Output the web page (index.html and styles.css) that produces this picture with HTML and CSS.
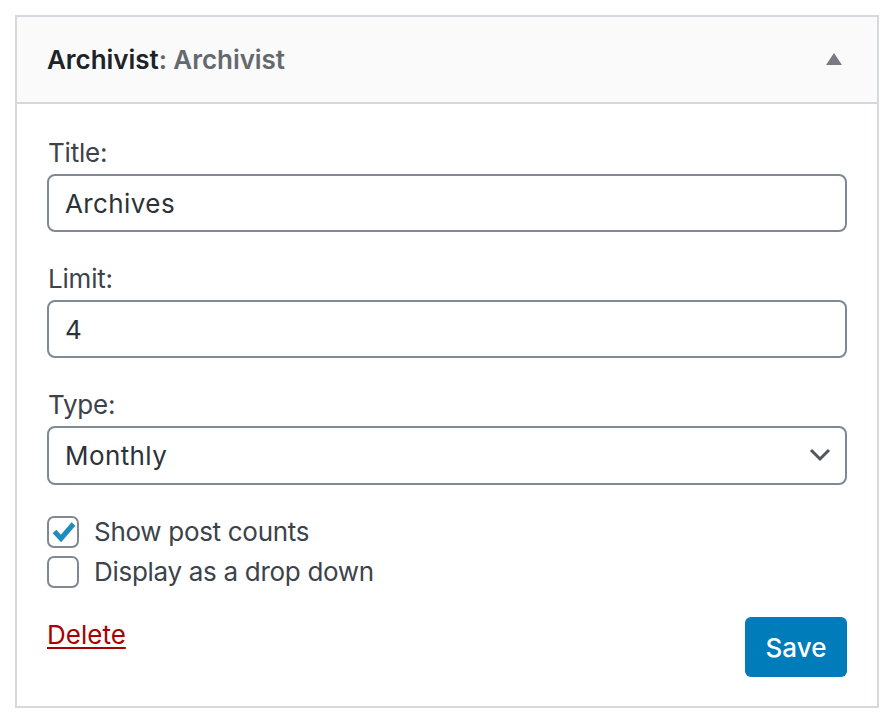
FILE: index.html
```html
<!DOCTYPE html>
<html lang="en">
<head>
<meta charset="utf-8">
<title>Archivist widget</title>
<link rel="stylesheet" href="styles.css">
</head>
<body>
<div class="widget">
  <div class="widget-top">
    <h3 class="widget-title">Archivist<span class="in-title">: Archivist</span></h3>
    <svg class="toggle" width="16" height="12" viewBox="0 0 16 12" aria-hidden="true"><polygon points="8,0 16,12 0,12" fill="#787c82"/></svg>
  </div>
  <div class="widget-inside">
    <p class="field">
      <label class="label" for="title">Title:</label>
      <input class="control" id="title" type="text" value="Archives">
    </p>
    <p class="field">
      <label class="label" for="limit">Limit:</label>
      <input class="control" id="limit" type="text" value="4">
    </p>
    <p class="field">
      <label class="label" for="type">Type:</label>
      <span class="select-wrap">
        <select class="control select" id="type"><option>Monthly</option></select>
        <svg class="chevron" width="22" height="14" viewBox="0 0 22 14" aria-hidden="true"><polyline points="2,2 11,11 20,2" fill="none" stroke="#50575e" stroke-width="3"/></svg>
      </span>
    </p>
    <div class="checks">
      <div class="check-row">
        <span class="box"><svg width="28" height="28" viewBox="0 0 28 28" aria-hidden="true"><polyline points="5.5,13.5 12,20.5 24.5,6" fill="none" stroke="#1e8cbe" stroke-width="5"/></svg></span>
        <span class="check-label">Show post counts</span>
      </div>
      <div class="check-row">
        <span class="box"></span>
        <span class="check-label">Display as a drop down</span>
      </div>
    </div>
    <div class="actions">
      <a class="delete" href="#">Delete</a>
      <button class="save" type="button">Save</button>
    </div>
  </div>
</div>
</body>
</html>
```
FILE: styles.css
```css
html, body {
  margin: 0;
  padding: 0;
  background: #ffffff;
}
body {
  font-family: Inter, "Noto Sans", "Liberation Sans", sans-serif;
  color: #3c434a;
}
.widget {
  margin: 15px 0 0 15px;
  width: 864px;
  box-sizing: border-box;
  border: 2px solid #d5d8dc;
  background: #ffffff;
}
.widget-top {
  height: 87px;
  box-sizing: border-box;
  padding: 0 35px 0 30px;
  background: #fafafa;
  border-bottom: 2px solid #d5d8dc;
  display: flex;
  align-items: center;
  justify-content: space-between;
}
.widget-title {
  margin: 0;
  font-size: 26px;
  font-weight: 600;
  color: #1d2327;
  letter-spacing: -0.05px;
}
.in-title {
  color: #646970;
}
.toggle {
  display: block;
  margin-top: -2px;
}
.widget-inside {
  padding: 31px 30px 29px 30px;
}
.field {
  margin: 0 0 29px 0;
  display: flex;
  flex-direction: column;
}
.label {
  font-size: 26px;
  line-height: 36px;
  margin-bottom: 3px;
  padding-left: 1px;
  color: #3c434a;
  letter-spacing: -0.2px;
}
.control {
  box-sizing: border-box;
  width: 100%;
  height: 58px;
  margin: 0;
  padding: 0 16px;
  border: 2px solid #7e8993;
  border-radius: 8px;
  background: #ffffff;
  font-family: inherit;
  font-size: 26px;
  letter-spacing: 0.4px;
  color: #2c3338;
  outline: none;
}
.select-wrap {
  position: relative;
  display: block;
}
.select {
  height: 59px;
  appearance: none;
  -webkit-appearance: none;
}
.chevron {
  position: absolute;
  right: 16px;
  top: 22px;
}
.checks {
  margin-top: 31px;
  display: flex;
  flex-direction: column;
  gap: 8px;
}
.check-row {
  display: flex;
  align-items: center;
  gap: 15px;
}
.box {
  box-sizing: border-box;
  width: 32px;
  height: 32px;
  border: 2px solid #7e8993;
  border-radius: 7px;
  display: flex;
  align-items: center;
  justify-content: center;
  flex: none;
}
.box svg {
  display: block;
}
.check-label {
  font-size: 26px;
  line-height: 32px;
  color: #3c434a;
  letter-spacing: -0.3px;
}
.actions {
  margin-top: 29px;
  display: flex;
  justify-content: space-between;
  align-items: flex-start;
}
.delete {
  font-size: 26px;
  line-height: 36px;
  color: #aa0000;
  text-decoration: underline;
  text-decoration-thickness: 2px;
  text-underline-offset: 3px;
}
.save {
  width: 102px;
  height: 60px;
  border: none;
  border-radius: 6px;
  background: #007cba;
  color: #ffffff;
  font-family: inherit;
  font-size: 26px;
  font-weight: 500;
  padding: 0;
}
```
